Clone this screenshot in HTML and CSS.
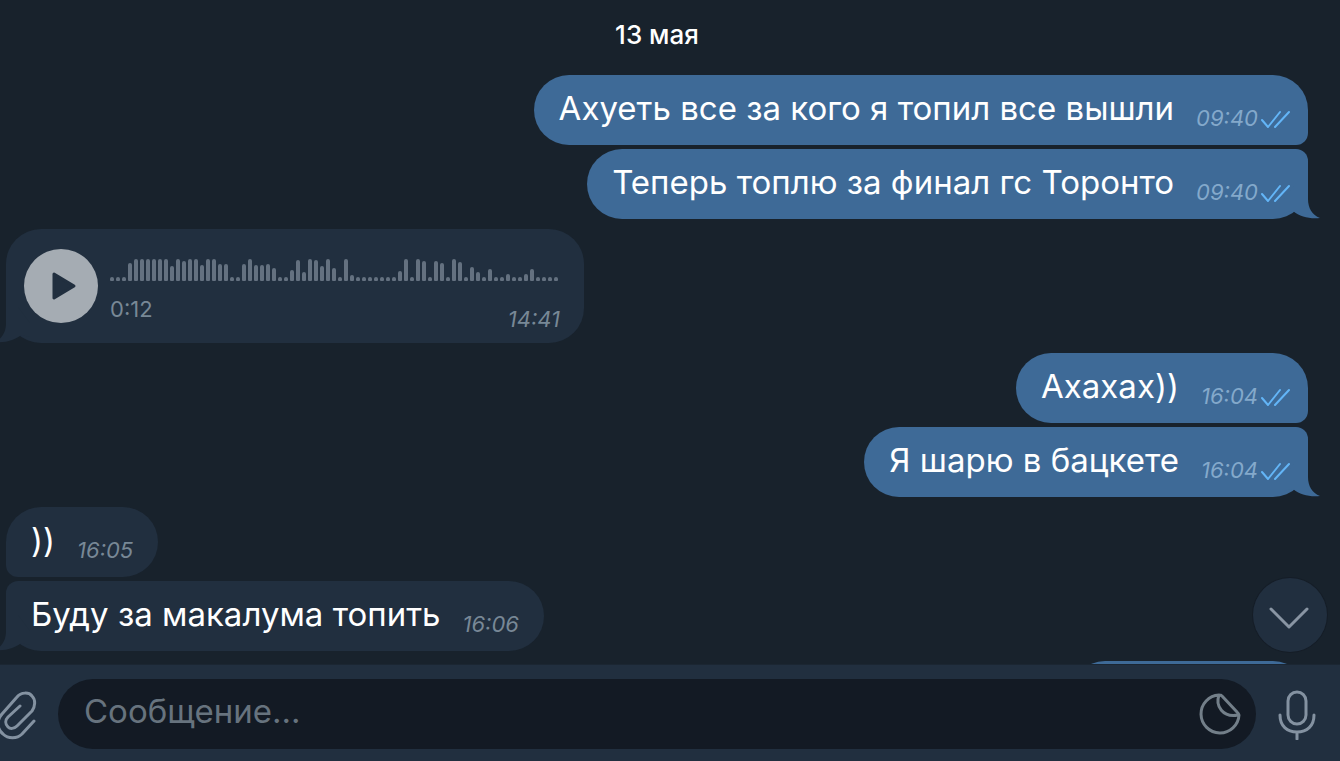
FILE: index.html
```html
<!DOCTYPE html>
<html lang="ru">
<head>
    <meta charset="UTF-8">
    <meta name="viewport" content="width=device-width, initial-scale=1.0">
    <title>Чат</title>
    <link rel="stylesheet" href="styles.css">
</head>
<body>
    <svg class="sprite" aria-hidden="true">
        <symbol id="ticks" viewBox="0 0 30 18">
            <path d="M2 10 L8 17 L20 2 M15 17 L29 2"/>
        </symbol>
        <symbol id="tail" viewBox="0 0 36 40">
            <path d="M12 4 H24 V20 C24 29 28 36 36 39 C26 40 16 38 9 32 L0 34 V20 Z"/>
        </symbol>
    </svg>

    <main class="chat">
        <div class="date">13 мая</div>

        <div class="group out">
            <div class="bubble">
                <span class="text">Ахуеть все за кого я топил все вышли</span>
                <span class="time">09:40</span>
                <svg class="ticks"><use href="#ticks"/></svg>
            </div>
            <div class="bubble">
                <span class="text">Теперь топлю за финал гс Торонто</span>
                <span class="time">09:40</span>
                <svg class="ticks"><use href="#ticks"/></svg>
                <svg class="tail"><use href="#tail"/></svg>
            </div>
        </div>

        <div class="group in">
            <div class="bubble voice">
                <button class="play" aria-label="Воспроизвести">
                    <svg viewBox="0 0 74 74"><path d="M30 25 L50 37 L30 49 Z"/></svg>
                </button>
                <div class="voice-body">
                    <div class="wave" id="wave"></div>
                    <div class="voice-meta">
                        <span class="duration">0:12</span>
                        <span class="time">14:41</span>
                    </div>
                </div>
                <svg class="tail"><use href="#tail"/></svg>
            </div>
        </div>

        <div class="group out">
            <div class="bubble">
                <span class="text">Ахахах))</span>
                <span class="time">16:04</span>
                <svg class="ticks"><use href="#ticks"/></svg>
            </div>
            <div class="bubble">
                <span class="text">Я шарю в бацкете</span>
                <span class="time">16:04</span>
                <svg class="ticks"><use href="#ticks"/></svg>
                <svg class="tail"><use href="#tail"/></svg>
            </div>
        </div>

        <div class="group in">
            <div class="bubble">
                <span class="text">))</span>
                <span class="time">16:05</span>
            </div>
            <div class="bubble">
                <span class="text">Буду за макалума топить</span>
                <span class="time">16:06</span>
                <svg class="tail"><use href="#tail"/></svg>
            </div>
        </div>

        <div class="group out">
            <div class="bubble next"></div>
        </div>

        <button class="scroll-down" aria-label="Вниз">
            <svg viewBox="0 0 74 74"><path d="M18 31 L36 49 L54 31"/></svg>
        </button>
    </main>

    <footer class="composer">
        <button class="icon-btn attach" aria-label="Прикрепить">
            <svg viewBox="0 0 42 52"><path d="M38 33 L26 46 C21 51 12 51 7 46 C1 41 0 33 6 26 L21 9 C25 4 33 4 36 8 C40 12 39 19 36 23 L21 38 C18 41 14 41 12 39 C9 36 9 32 12 29 L24 18"/></svg>
        </button>
        <div class="field">
            <input type="text" placeholder="Сообщение..." aria-label="Сообщение">
            <button class="icon-btn sticker" aria-label="Стикеры">
                <svg viewBox="0 0 42 42"><path d="M20 2 A19 19 0 1 0 40 22 C40 21 39 20 38 19 L23 3 C22 2 21 2 20 2 C16 13 24 25 39 22"/></svg>
            </button>
        </div>
        <button class="icon-btn mic" aria-label="Голосовое сообщение">
            <svg viewBox="0 0 40 52"><rect x="11" y="4" width="18" height="32" rx="9"/><path d="M3 27 C3 38 10 44 20 44 C30 44 37 38 37 27 M20 44 V51"/></svg>
        </button>
    </footer>

    <script src="script.js"></script>
</body>
</html>
```
FILE: styles.css
```css
* {
    box-sizing: border-box;
}

body {
    margin: 0;
    height: 100vh;
    display: flex;
    flex-direction: column;
    background: #18222c;
    color: #fff;
    font-family: Inter, 'Open Sans', sans-serif;
    overflow: hidden;
}

button {
    padding: 0;
    border: none;
    background: none;
    cursor: pointer;
}

svg {
    display: block;
    fill: none;
    stroke-linecap: round;
    stroke-linejoin: round;
}

.sprite {
    display: none;
}

/* messages */
.chat {
    flex: 1;
    min-height: 0;
    position: relative;
    display: flex;
    flex-direction: column;
    gap: 10px;
    padding: 20px 32px 0 6px;
    overflow: hidden;
}

.date {
    flex-shrink: 0;
    margin-bottom: 15px;
    text-align: center;
    font-size: 26px;
    line-height: 30px;
    font-weight: 500;
}

.group {
    display: flex;
    flex-direction: column;
    flex-shrink: 0;
    gap: 4px;
}

.in {
    align-items: flex-start;
}

.out {
    align-items: flex-end;
}

.bubble {
    position: relative;
    display: flex;
    align-items: flex-end;
    min-height: 70px;
    padding: 13px 25px;
    border-radius: 35px;
}

.in .bubble {
    background: #212f3f;
}

.out .bubble {
    padding-right: 18px;
    background: #3e6a97;
}

.in .bubble:not(:last-child) {
    border-bottom-left-radius: 12px;
}

.in .bubble:not(:first-child) {
    border-top-left-radius: 12px;
}

.out .bubble:not(:last-child) {
    border-bottom-right-radius: 12px;
}

.out .bubble:not(:first-child) {
    border-top-right-radius: 12px;
}

.text {
    margin-bottom: 4px;
    font-size: 33px;
    line-height: 40px;
}

.time {
    margin-left: 22px;
    font-size: 22px;
    line-height: 28px;
    font-style: italic;
    color: #788896;
}

.out .time {
    color: #84a9cb;
}

.ticks {
    width: 30px;
    height: 18px;
    margin: 0 0 4px 2px;
    stroke: #63b5f7;
    stroke-width: 2;
}

.tail {
    position: absolute;
    right: -12px;
    bottom: 0;
    width: 36px;
    height: 40px;
    fill: #3e6a97;
}

.in .tail {
    right: auto;
    left: -12px;
    fill: #212f3f;
    transform: scaleX(-1);
}

.next {
    width: 238px;
}

/* voice message */
.voice {
    align-items: flex-start;
    gap: 12px;
    padding: 20px 24px 10px 18px;
}

.play {
    width: 74px;
    height: 74px;
    border-radius: 50%;
    background: #a5acb3;
}

.play path {
    fill: #212f3f;
    stroke: #212f3f;
    stroke-width: 3;
}

.voice-body {
    padding-top: 10px;
}

.wave {
    display: flex;
    align-items: flex-end;
    gap: 2px;
    height: 22px;
    padding-right: 2px;
}

.wave span {
    width: 4px;
    border-radius: 2px 2px 1px 1px;
    background: #647180;
}

.voice-meta {
    display: flex;
    justify-content: space-between;
    align-items: flex-end;
    height: 52px;
}

.duration {
    align-self: flex-start;
    margin-top: 14px;
    font-size: 22px;
    line-height: 28px;
    color: #788896;
}

.scroll-down {
    position: absolute;
    right: 13px;
    bottom: 12px;
    width: 74px;
    height: 74px;
    border-radius: 50%;
    background: #212f3f;
    box-shadow: 0 0 0 1px #151d27;
}

.scroll-down path {
    stroke: #8995a3;
    stroke-width: 3;
}

/* bottom bar */
.composer {
    display: flex;
    align-items: center;
    padding: 14px 23px 12px 0;
    border-top: 1px solid #1b2632;
    background: #212f3f;
}

.icon-btn {
    flex-shrink: 0;
    stroke: #8492a1;
    stroke-width: 3;
}

.attach {
    width: 42px;
    margin-left: -4px;
}

.field {
    flex: 1;
    display: flex;
    align-items: center;
    height: 70px;
    margin: 0 21px 0 20px;
    padding: 0 15px 0 26px;
    border-radius: 35px;
    background: #131a24;
}

.field input {
    flex: 1;
    min-width: 0;
    padding: 0 0 6px;
    border: none;
    outline: none;
    background: none;
    color: #fff;
    font-family: inherit;
    font-size: 33px;
    line-height: 40px;
}

.field input::placeholder {
    color: #67737e;
    opacity: 1;
}

.sticker {
    width: 42px;
    stroke: #737f89;
}

.mic {
    width: 40px;
}
```
FILE: script.js
```js
// voice message levels, px
const levels = [
    4, 4, 4, 18, 22, 22, 22, 22, 22, 22, 15, 22, 20, 22, 22, 16, 22, 22, 17, 17,
    4, 4, 17, 22, 16, 16, 17, 13, 4, 4, 11, 21, 9, 22, 21, 15, 22, 13, 4, 22,
    6, 4, 4, 4, 4, 4, 4, 4, 10, 22, 4, 22, 20, 4, 20, 18, 4, 22, 19, 4,
    14, 9, 4, 12, 4, 4, 7, 4, 4, 7, 12, 4, 4, 4, 4
];

const wave = document.getElementById('wave');

levels.forEach(level => {
    const bar = document.createElement('span');
    bar.style.height = level + 'px';
    wave.appendChild(bar);
});
```
